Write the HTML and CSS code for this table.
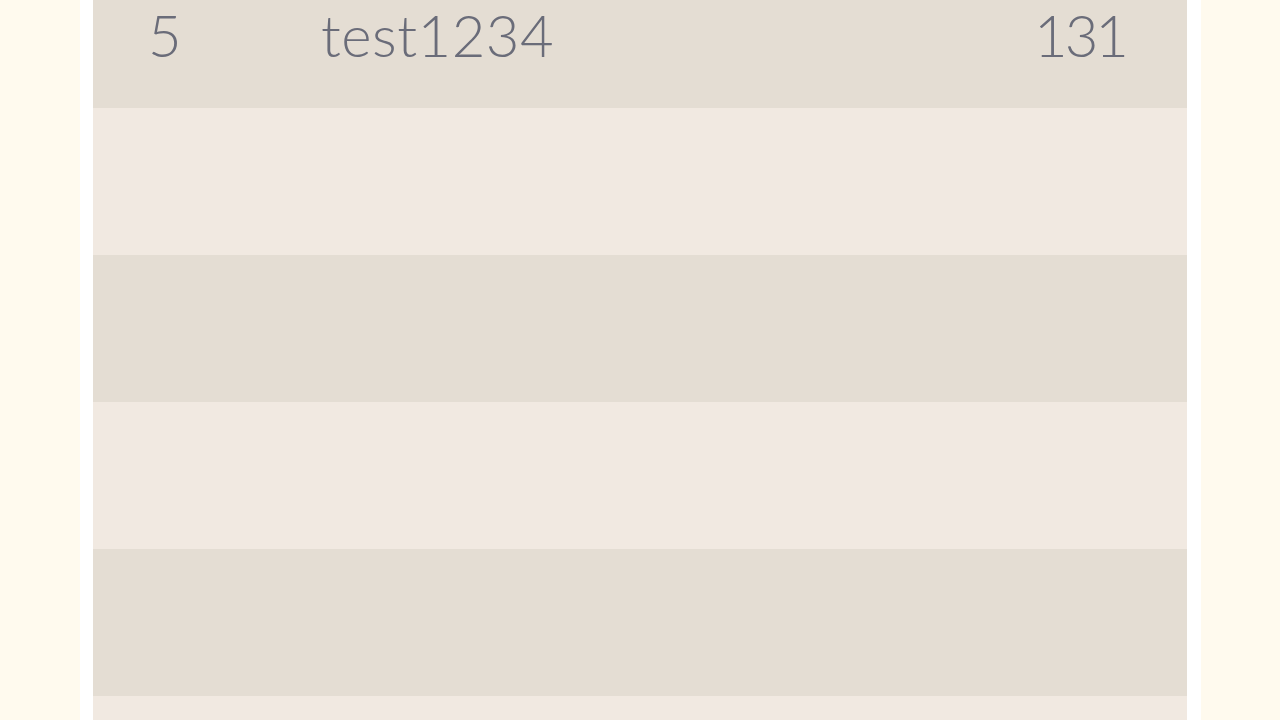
FILE: index.html
```html
<!DOCTYPE html>
<html>
<head>
<meta charset="utf-8">
<link rel="stylesheet" href="styles.css">
</head>
<body>
<div class="page">
  <div class="frame">
    <div class="board">
      <div class="row dark"><span class="rank">5</span><span class="name">test1234</span><span class="score">131</span></div>
      <div class="row light"></div>
      <div class="row dark"></div>
      <div class="row light"></div>
      <div class="row dark"></div>
      <div class="row light short"></div>
    </div>
  </div>
</div>
</body>
</html>
```
FILE: styles.css
```css
html, body {
  margin: 0;
  padding: 0;
  background: #fffaee;
  overflow: hidden;
  height: 720px;
}
.page {
  padding-left: 80px;
  height: 720px;
  overflow: hidden;
}
.frame {
  width: 1094px;
  border-left: 13px solid #ffffff;
  border-right: 14px solid #ffffff;
  margin-top: -39px;
}
.board {
  display: flex;
  flex-direction: column;
}
.row {
  height: 147px;
  display: grid;
  grid-template-columns: 173px 1fr auto;
  align-items: center;
  padding: 0 61px 0 55px;
  font-family: "Lato", "DejaVu Sans", sans-serif;
  font-weight: 300;
  font-size: 58px;
  color: #6a6c79;
}
.short { height: 63px; }
.dark { background: #e4ddd3; }
.light { background: #f1e9e1; }
.name { letter-spacing: 0.5px; }
.score { text-align: right; letter-spacing: -3px; }
```
